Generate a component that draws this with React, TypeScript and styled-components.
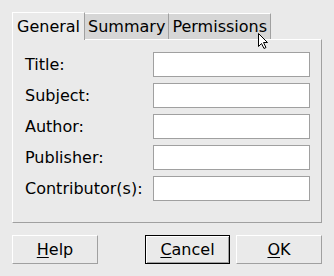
import React from "react";
import styled, { createGlobalStyle, css } from "styled-components";

const GlobalStyle = createGlobalStyle`
  html, body {
    margin: 0;
    padding: 0;
    background: #eaeaea;
  }
  body {
    font-family: "DejaVu Sans", "Liberation Sans", sans-serif;
    font-size: 16px;
    color: #000;
  }
  * { box-sizing: border-box; }
`;

const Dialog = styled.div`
  position: relative;
  width: 334px;
  height: 276px;
  padding: 12px 12px 0 12px;
  display: flex;
  flex-direction: column;
`;

const TabBar = styled.div`
  display: flex;
  align-items: flex-end;
  height: 27px;
  position: relative;
  z-index: 1;
`;

const Tab = styled.div<{ $active?: boolean }>`
  display: flex;
  align-items: center;
  line-height: 19px;
  border-top: 1px solid #ffffff;
  border-left: 1px solid #ffffff;
  border-right: 1px solid #a0a0a0;
  ${(p) =>
    p.$active
      ? css`
          height: 28px;
          margin-bottom: -1px;
          background: #eaeaea;
          padding: 0 4px 1px 4px;
        `
      : css`
          height: 26px;
          background: #d6d6d6;
          border-left: none;
          padding: 0 3px 0 3px;
        `}
`;

const Panel = styled.div`
  height: 184px;
  border-top: 1px solid #ffffff;
  border-left: 1px solid #ffffff;
  border-right: 1px solid #a0a0a0;
  border-bottom: 1px solid #a0a0a0;
  padding: 12px 11px 0 12px;
  display: grid;
  grid-template-columns: 1fr 157px;
  grid-auto-rows: 25px;
  row-gap: 6px;
  align-content: start;
`;

const Label = styled.label`
  display: flex;
  align-items: center;
  line-height: 19px;
`;

const Field = styled.div`
  height: 25px;
  background: #ffffff;
  border: 1px solid #a0a0a0;
`;

const ButtonRow = styled.div`
  margin-top: 12px;
  display: flex;
  justify-content: space-between;
`;

const ButtonGroup = styled.div`
  display: flex;
  gap: 6px;
`;

const Button = styled.div<{ $default?: boolean; $w: number }>`
  width: ${(p) => p.$w}px;
  height: 29px;
  display: flex;
  align-items: center;
  justify-content: center;
  line-height: 19px;
  background: #eaeaea;
  ${(p) =>
    p.$default
      ? css`
          border: 1px solid #000000;
          box-shadow: inset 1px 1px 0 #ffffff, inset -1px -1px 0 #a0a0a0;
        `
      : css`
          border-top: 1px solid #ffffff;
          border-left: 1px solid #ffffff;
          border-right: 1px solid #a0a0a0;
          border-bottom: 1px solid #a0a0a0;
        `}
  u {
    text-decoration-thickness: 1px;
    text-underline-offset: 2px;
  }
`;

const Cursor = styled.svg`
  position: absolute;
  left: 257px;
  top: 32px;
  z-index: 5;
`;

const fields = ["Title:", "Subject:", "Author:", "Publisher:", "Contributor(s):"];

export default function App() {
  return (
    <>
      <GlobalStyle />
      <Dialog>
        <TabBar>
          <Tab $active>General</Tab>
          <Tab>Summary</Tab>
          <Tab>Permissions</Tab>
        </TabBar>
        <Panel>
          {fields.map((f) => (
            <React.Fragment key={f}>
              <Label>{f}</Label>
              <Field />
            </React.Fragment>
          ))}
        </Panel>
        <ButtonRow>
          <Button $w={86}>
            <span>
              <u>H</u>elp
            </span>
          </Button>
          <ButtonGroup>
            <Button $w={85} $default>
              <span>
                <u>C</u>ancel
              </span>
            </Button>
            <Button $w={86}>
              <span>
                <u>O</u>K
              </span>
            </Button>
          </ButtonGroup>
        </ButtonRow>
        <Cursor width="13" height="18" viewBox="0 0 13 18">
          <path
            d="M1.5 1.5 L1.5 14.5 L4.5 11.5 L7 16.5 L9 15.5 L6.5 10.5 L10.5 10.5 Z"
            fill="#ffffff"
            stroke="#000000"
            strokeWidth="1"
            strokeLinejoin="miter"
          />
        </Cursor>
      </Dialog>
    </>
  );
}
